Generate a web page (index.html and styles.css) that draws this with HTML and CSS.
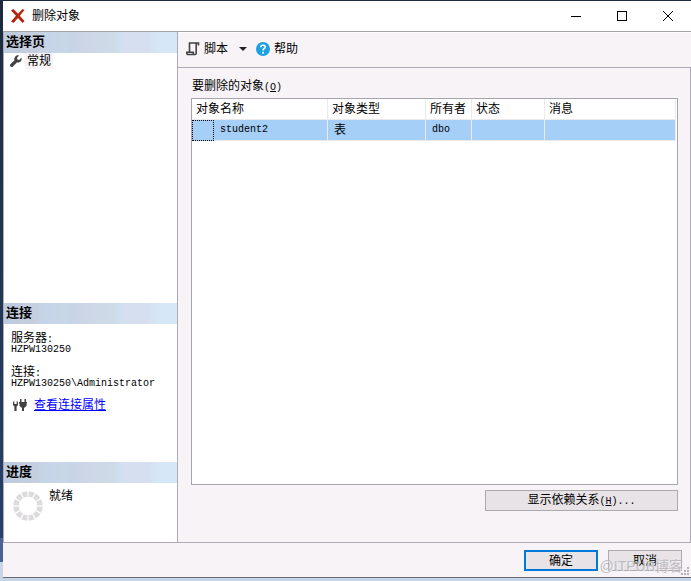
FILE: index.html
```html
<!DOCTYPE html>
<html lang="zh-CN">
<head>
    <meta charset="UTF-8">
    <meta name="viewport" content="width=device-width, initial-scale=1.0">
    <title>删除对象</title>
    <link rel="stylesheet" href="styles.css">
</head>
<body>
    <div class="dialog">
        <!-- 标题栏 -->
        <header class="title-bar">
            <svg width="16" height="16" viewBox="0 0 16 16">
                <path d="M1 2.5L3.5 1L8 5.8L12.5 1L14.5 2L9.8 7.8L14.5 13L12.5 15L8 10L3.5 15L1 13.5L6 7.8Z" fill="#b3260e"/>
            </svg>
            <h1 class="title">删除对象</h1>
            <div class="window-controls">
                <button type="button" aria-label="最小化">
                    <svg width="12" height="12" viewBox="0 0 12 12"><path d="M1 6.5H11" stroke="#000"/></svg>
                </button>
                <button type="button" aria-label="最大化">
                    <svg width="12" height="12" viewBox="0 0 12 12"><rect x="1.5" y="1.5" width="9" height="9" fill="none" stroke="#000"/></svg>
                </button>
                <button type="button" aria-label="关闭">
                    <svg width="12" height="12" viewBox="0 0 12 12"><path d="M1 1L11 11M11 1L1 11" stroke="#000"/></svg>
                </button>
            </div>
        </header>

        <div class="dialog-body">
            <!-- 左侧栏 -->
            <aside class="sidebar">
                <section class="pages">
                    <h2 class="section-title">选择页</h2>
                    <div class="page-item">
                        <svg width="12" height="12" viewBox="0 0 12 12">
                            <path d="M11.4 2.7L9.2 4.9L7.3 4.6L7 2.8L9.1 0.6A3.6 3.6 0 0 0 4.5 5.2L0.6 9.1A1.5 1.5 0 0 0 2.9 11.4L6.9 7.4A3.6 3.6 0 0 0 11.4 2.7Z" fill="#424242"/>
                        </svg>
                        <span class="page-name">常规</span>
                    </div>
                </section>

                <section class="connection">
                    <h2 class="section-title">连接</h2>
                    <dl class="connection-info">
                        <dt>服务器<span class="mono">:</span></dt>
                        <dd class="mono">HZPW130250</dd>
                        <dt>连接<span class="mono">:</span></dt>
                        <dd class="mono">HZPW130250\Administrator</dd>
                    </dl>
                    <div class="connection-link">
                        <svg width="14" height="14" viewBox="0 0 14 14">
                            <path d="M0 4L1.3 3V6H3.7V3L5 4V7L3.6 8.5V13H1.4V8.5L0 7Z" fill="#424242"/>
                            <path d="M7 1H8.5V4H11.5V1H13V4H14V5.5H13.5V8L11 10V13H9V10L6.5 8V5.5H6V4H7Z" fill="#424242"/>
                        </svg>
                        <a href="#">查看连接属性</a>
                    </div>
                </section>

                <section class="progress">
                    <h2 class="section-title">进度</h2>
                    <div class="progress-status">
                        <svg width="30" height="30" viewBox="0 0 30 30">
                            <circle cx="15" cy="15" r="12" fill="none" stroke="#dedbde" stroke-width="5.5" pathLength="120" stroke-dasharray="8 2" stroke-dashoffset="-1"/>
                        </svg>
                        <span>就绪</span>
                    </div>
                </section>
            </aside>

            <!-- 右侧内容 -->
            <main class="content">
                <div class="toolbar">
                    <button type="button" class="tool">
                        <svg width="14" height="14" viewBox="0 0 14 14">
                            <path d="M3.5 10V1H12.5V3.5M10.2 1V11.5Q10.2 12.5 9 12.5H1.5Q0.7 12 0.7 10.3H7.3V12" fill="none" stroke="#424242" stroke-width="1.6"/>
                        </svg>
                        脚本
                    </button>
                    <button type="button" class="tool-arrow" aria-label="脚本选项">
                        <svg width="8" height="4" viewBox="0 0 8 4"><path d="M0 0H8L4 4Z" fill="#222"/></svg>
                    </button>
                    <button type="button" class="tool">
                        <svg width="14" height="14" viewBox="0 0 14 14">
                            <circle cx="7" cy="7" r="7" fill="#1ba1e2"/>
                            <path d="M4.7 5.2Q4.8 3.3 7 3.3Q9.3 3.3 9.3 5.1Q9.3 6.1 8 6.8Q7 7.4 7 8.6" fill="none" stroke="#fff" stroke-width="1.6"/>
                            <rect x="6.1" y="9.8" width="1.8" height="1.8" fill="#fff"/>
                        </svg>
                        帮助
                    </button>
                </div>

                <div class="panel">
                    <div class="panel-label" id="objectsLabel">要删除的对象<span class="mono">(<u>O</u>)</span></div>
                    <div class="grid-box">
                        <table class="grid" aria-labelledby="objectsLabel">
                            <colgroup>
                                <col class="col-selector">
                                <col class="col-name">
                                <col class="col-type">
                                <col class="col-owner">
                                <col class="col-state">
                                <col>
                            </colgroup>
                            <thead>
                                <tr>
                                    <th colspan="2">对象名称</th>
                                    <th>对象类型</th>
                                    <th>所有者</th>
                                    <th>状态</th>
                                    <th>消息</th>
                                </tr>
                            </thead>
                            <tbody>
                                <tr>
                                    <td class="selector"></td>
                                    <td class="mono">student2</td>
                                    <td>表</td>
                                    <td class="mono">dbo</td>
                                    <td></td>
                                    <td></td>
                                </tr>
                            </tbody>
                        </table>
                    </div>
                    <button type="button" class="btn btn-wide">显示依赖关系<span class="mono">(<u>H</u>)...</span></button>
                </div>
            </main>
        </div>

        <!-- 底部按钮 -->
        <footer class="dialog-footer">
            <button type="button" class="btn btn-primary">确定</button>
            <button type="button" class="btn">取消</button>
            <span class="watermark">@ITPUB博客</span>
            <svg class="resize-grip" width="8" height="8" viewBox="0 0 8 8">
                <path d="M6 0h2v2h-2zM3 3h2v2h-2zM6 3h2v2h-2zM0 6h2v2h-2zM3 6h2v2h-2zM6 6h2v2h-2z" fill="#b5b2b5"/>
            </svg>
        </footer>
    </div>
</body>
</html>
```
FILE: styles.css
```css
* {
    margin: 0;
    padding: 0;
    box-sizing: border-box;
}

body {
    height: 100vh;
    padding: 1px 0 3px 3px;
    background: linear-gradient(#1d2b3c, #27406b 538px, #4a6390 538px, #4a6390 562px, #c9d4e6 562px);
    font-family: "Liberation Sans", "Noto Sans CJK SC", sans-serif;
    font-size: 12px;
    line-height: 16px;
    color: #000;
}

button {
    border: none;
    background: none;
    font: inherit;
    color: inherit;
}

svg {
    display: block;
    flex: none;
}

.mono {
    font-family: "Liberation Mono", monospace;
    font-size: 10px;
}

/* 对话框 */
.dialog {
    display: flex;
    flex-direction: column;
    height: 100%;
    background: #f7f3f7;
    border-bottom: 1px solid #666a75;
}

.title-bar {
    display: flex;
    align-items: center;
    height: 31px;
    padding-left: 7px;
    background: #fff;
    border-bottom: 1px solid #a5a5a5;
}

.title {
    flex: 1;
    margin-left: 6px;
    font-size: 12px;
    font-weight: normal;
}

.window-controls {
    display: flex;
}

.window-controls button {
    display: flex;
    align-items: center;
    justify-content: center;
    width: 46px;
    height: 28px;
}

.dialog-body {
    display: flex;
    flex: 1;
    min-height: 0;
    border-bottom: 1px solid #adaab5;
}

/* 左侧栏 */
.sidebar {
    display: flex;
    flex-direction: column;
    width: 175px;
    background: #fff;
    border-left: 1px solid #adaab5;
    border-right: 1px solid #adaab5;
}

.pages {
    flex: 1;
}

.section-title {
    height: 21px;
    padding-left: 2px;
    background: linear-gradient(90deg, #bdcbde, #c6cfde 20%, #c6d3e7 21%, #c6d7e7 36%, #c6d3e7 38%, #ced7e7 50%, #cedbe7 64%, #cedff0 66%, #d6dff0 70%, #d6dfef 84%, #d6e7f7 90%);
    font-size: 13px;
    font-weight: bold;
    line-height: 20px;
}

.page-item {
    display: flex;
    align-items: center;
    gap: 3px;
    padding-left: 6px;
}

.page-name {
    padding: 0 2px;
    background: #f7f3f7;
}

.connection {
    height: 159px;
}

.connection-info {
    padding: 8px 7px 7px;
}

.connection-info dt,
.connection-info dd {
    height: 12px;
    line-height: 12px;
}

.connection-info dd + dt {
    margin-top: 10px;
}

.connection-link {
    display: flex;
    align-items: center;
    gap: 7px;
    padding-left: 9px;
}

.connection-link a {
    color: #00f;
}

.progress {
    height: 80px;
}

.progress-status {
    display: flex;
    gap: 6px;
    padding: 5px 9px;
}

.progress-status svg {
    margin-top: 3px;
}

/* 右侧内容 */
.content {
    display: flex;
    flex: 1;
    flex-direction: column;
    border-top: 1px solid #fff;
}

.toolbar {
    display: flex;
    align-items: center;
    height: 34px;
    padding: 0 8px 2px;
}

.tool {
    display: flex;
    align-items: center;
    gap: 4px;
}

.tool-arrow {
    padding: 0 9px 0 11px;
}

.panel {
    display: flex;
    flex: 1;
    flex-direction: column;
    padding: 10px 12px 31px 13px;
    border-top: 1px solid #adaab5;
    border-right: 1px solid #adaab5;
}

.panel-label {
    height: 20px;
    padding-left: 1px;
}

.grid-box {
    flex: 1;
    padding-right: 1px;
    background: #fff;
    border: 1px solid #a5a6ad;
}

.grid {
    width: 100%;
    table-layout: fixed;
    border-collapse: separate;
    border-spacing: 0;
}

.col-selector {
    width: 22px;
}

.col-name {
    width: 114px;
}

.col-type {
    width: 98px;
}

.col-owner {
    width: 46px;
}

.col-state {
    width: 73px;
}

.grid th,
.grid td {
    height: 21px;
    border-right: 1px solid #ece9ec;
    border-bottom: 1px solid #ece9ec;
    text-align: left;
    white-space: nowrap;
}

.grid th {
    padding-left: 4px;
    font-weight: normal;
}

.grid td {
    padding-left: 6px;
    background: #a5cff7;
}

.grid .selector {
    border: 1px dotted #000;
}

/* 按钮 */
.btn {
    width: 74px;
    height: 21px;
    background: #e7e3e7;
    border: 1px solid #adaaad;
    line-height: 18px;
}

.btn-wide {
    align-self: flex-end;
    width: 193px;
    margin-top: 5px;
}

.btn-primary {
    border: 2px solid #0078d7;
    line-height: 16px;
}

.dialog-footer {
    position: relative;
    display: flex;
    justify-content: flex-end;
    gap: 10px;
    padding: 7px 9px 6px;
}

.watermark {
    position: absolute;
    right: 8px;
    bottom: 3px;
    color: #b5b3b7;
    font-size: 14px;
    text-shadow: 1px 1px #f4f2f4;
    opacity: 0.8;
}

.resize-grip {
    position: absolute;
    right: 2px;
    bottom: 2px;
}
```
